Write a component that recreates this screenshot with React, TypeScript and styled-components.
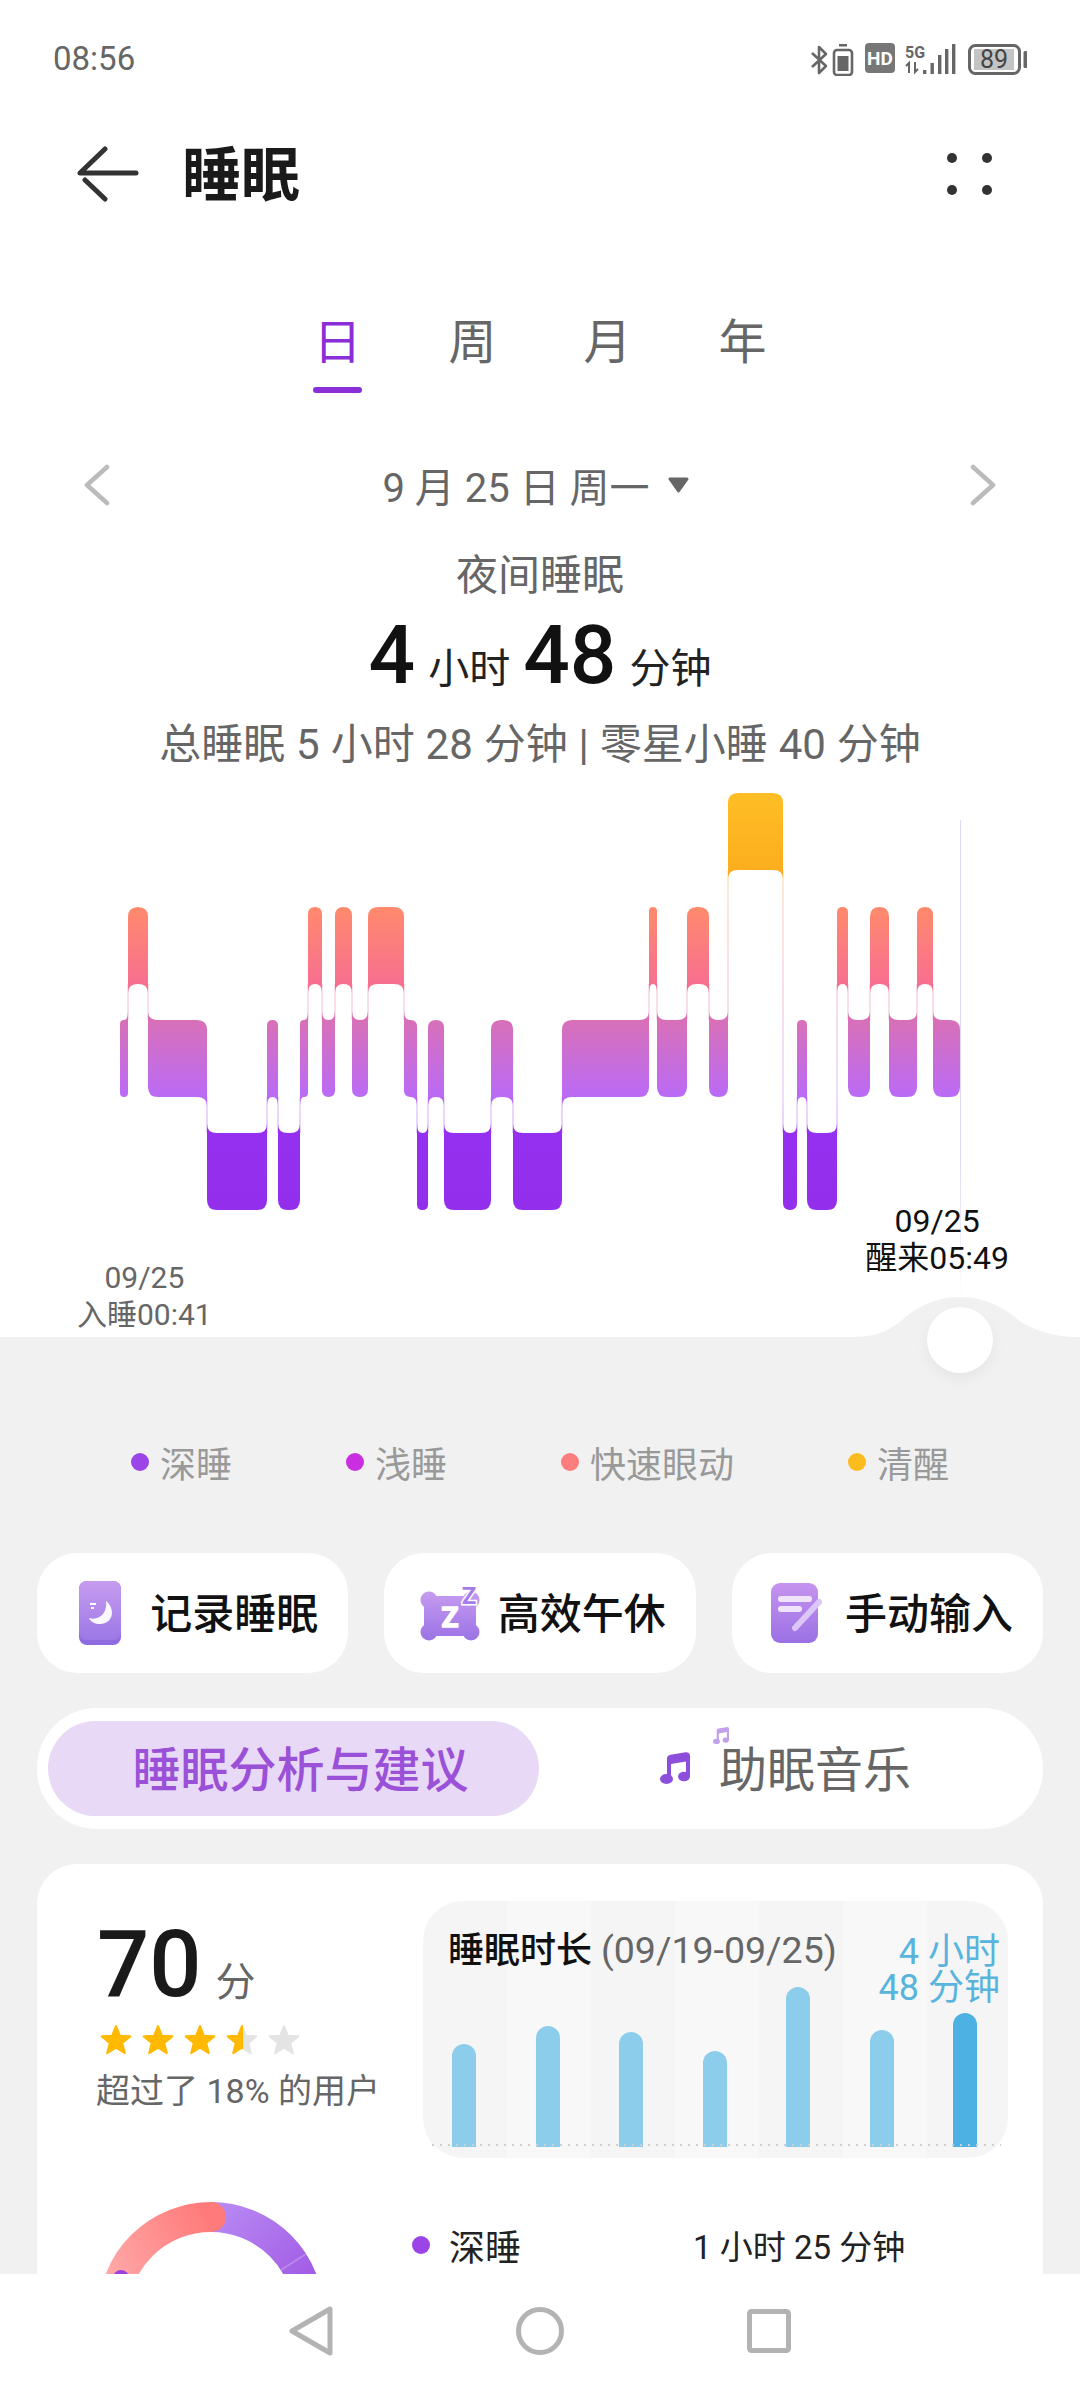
import React from "react";
import styled, { createGlobalStyle } from "styled-components";

const GlobalStyle = createGlobalStyle`
  html, body {
    margin: 0;
    padding: 0;
    background: #f1f1f1;
  }
  body {
    font-family: Roboto, "Noto Sans CJK SC", sans-serif;
  }
  * {
    box-sizing: border-box;
  }
`;

const Page = styled.div`
  width: 1080px;
  height: 2388px;
  display: flex;
  flex-direction: column;
  overflow: hidden;
  background: #f1f1f1;
`;

const Content = styled.div`
  flex: 1;
  min-height: 0;
  overflow: hidden;
`;

const TopPanel = styled.div`
  position: relative;
  height: 1337px;
  background: #fff;
`;

const StatusBar = styled.div`
  height: 116px;
  padding: 0 53px;
  display: flex;
  align-items: center;
  justify-content: space-between;
`;

const Clock = styled.span`
  font-size: 33px;
  color: #666;
`;

const Header = styled.div`
  height: 114px;
  padding: 2px 87px 0 77px;
  display: flex;
  align-items: center;
  gap: 43px;
`;

const Title = styled.h1`
  flex: 1;
  margin: 3px 0 0;
  font-size: 59px;
  line-height: 66px;
  font-weight: 700;
  color: #1a1a1a;
`;

const Tabs = styled.div`
  margin-top: 90px;
  display: flex;
  justify-content: center;
`;

const Tab = styled.div<{ $active?: boolean }>`
  width: 135px;
  height: 73px;
  display: flex;
  flex-direction: column;
  align-items: center;
  justify-content: space-between;
  font-size: 48px;
  line-height: 46px;
  color: ${(p) => (p.$active ? "#8a2fd8" : "#666")};
`;

const TabMark = styled.div`
  width: 49px;
  height: 6px;
  border-radius: 3px;
  background: #8a2fd8;
`;

const DateRow = styled.div`
  margin-top: 62px;
  height: 60px;
  padding: 0 84px;
  display: flex;
  align-items: center;
  justify-content: space-between;
`;

const DateLabel = styled.div`
  display: flex;
  align-items: center;
  gap: 18px;
  margin-right: 9px;
  font-size: 40px;
  color: #666;
`;

const SummaryTitle = styled.div`
  margin-top: 36px;
  font-size: 42px;
  line-height: 50px;
  text-align: center;
  color: #666;
`;

const SummaryMain = styled.div`
  margin-top: 9px;
  height: 90px;
  display: flex;
  align-items: baseline;
  justify-content: center;
  gap: 13px;
  line-height: 90px;
  color: #111;
`;

const BigNumber = styled.span`
  font-size: 82px;
  font-weight: 500;
`;

const Unit = styled.span`
  font-size: 41px;
  color: #222;
`;

const SummaryTotal = styled.div`
  margin-top: 20px;
  font-size: 42px;
  line-height: 50px;
  text-align: center;
  color: #666;
  white-space: nowrap;
  word-spacing: 0.5px;
`;

const ChartSvg = styled.svg`
  display: block;
  margin-top: 10px;
  overflow: visible;
`;

const CursorLine = styled.div`
  position: absolute;
  left: 960px;
  top: 820px;
  width: 1px;
  height: 480px;
  background: linear-gradient(#e0d8f4 70%, rgba(224, 216, 244, 0));
`;

const TimeLabels = styled.div`
  position: relative;
  display: flex;
  justify-content: space-between;
  align-items: flex-start;
  padding: 0 71px 0 77px;
`;

const TimeLabel = styled.div<{ $wake?: boolean }>`
  margin-top: ${(p) => (p.$wake ? 0 : 56)}px;
  font-size: ${(p) => (p.$wake ? 32 : 30)}px;
  line-height: 37px;
  text-align: center;
  color: ${(p) => (p.$wake ? "#111" : "#666")};
`;

const GreyPanel = styled.div`
  position: relative;
  padding: 0 37px;
`;

const Bump = styled.svg`
  position: absolute;
  right: 0;
  top: -40px;
`;

const Handle = styled.div`
  position: absolute;
  left: 927px;
  top: -30px;
  width: 66px;
  height: 66px;
  border-radius: 50%;
  background: #fff;
  box-shadow: 0 6px 14px rgba(0, 0, 0, 0.05);
`;

const Legend = styled.div`
  padding-top: 102px;
  height: 151px;
  display: flex;
  justify-content: center;
  gap: 114px;
`;

const LegendItem = styled.div`
  display: flex;
  align-items: center;
  gap: 11px;
  height: 46px;
  font-size: 36px;
  color: #999;
`;

const Dot = styled.span<{ $color: string }>`
  flex: none;
  width: 18px;
  height: 18px;
  border-radius: 50%;
  background: ${(p) => p.$color};
`;

const Actions = styled.div`
  margin-top: 65px;
  display: grid;
  grid-template-columns: repeat(3, 1fr);
  gap: 36px;
`;

const ActionButton = styled.div<{ $gap: number }>`
  height: 120px;
  padding-right: 30px;
  display: flex;
  align-items: center;
  justify-content: flex-end;
  gap: ${(p) => p.$gap}px;
  border-radius: 40px;
  background: #fff;
  font-size: 42px;
  font-weight: 500;
  color: #111;
`;

const ActionLabel = styled.span`
  margin-bottom: 5px;
`;

const Segment = styled.div`
  margin-top: 35px;
  height: 121px;
  padding: 13px 11px;
  display: flex;
  border-radius: 60px;
  background: #fff;
`;

const SegmentActive = styled.div`
  width: 491px;
  padding: 0 0 5px 14px;
  display: flex;
  align-items: center;
  justify-content: center;
  border-radius: 48px;
  background: #e8daf6;
  font-size: 48px;
  font-weight: 500;
  color: #9b50d8;
`;

const SegmentOther = styled.div`
  flex: 1;
  display: flex;
  align-items: center;
  justify-content: center;
  gap: 29px;
  font-size: 48px;
  color: #666;
`;

const MusicLabel = styled.span`
  position: relative;
  margin-top: 4px;
  line-height: 48px;
`;

const SmallNote = styled.span`
  position: absolute;
  display: block;
  left: -6px;
  top: -20px;
  line-height: 0;
`;

const Card = styled.div`
  margin-top: 35px;
  height: 560px;
  padding: 37px 36px 0 59px;
  border-radius: 40px 40px 0 0;
  background: #fff;
`;

const CardTop = styled.div`
  display: grid;
  grid-template-columns: 327px 585px;
`;

const ScoreColumn = styled.div`
  padding-top: 24px;
`;

const ScoreRow = styled.div`
  display: flex;
  align-items: baseline;
  gap: 14px;
  height: 77px;
  line-height: 80px;
  padding-left: 1px;
`;

const ScoreValue = styled.span`
  font-size: 92px;
  font-weight: 500;
  color: #1a1a1a;
`;

const ScoreUnit = styled.span`
  font-size: 40px;
  color: #666;
`;

const Stars = styled.div`
  margin: 22px 0 0 3px;
  display: flex;
  gap: 8px;
`;

const ScoreNote = styled.div`
  margin-top: 15px;
  font-size: 34px;
  line-height: 40px;
  color: #666;
  white-space: nowrap;
`;

const TrendCard = styled.div`
  position: relative;
  height: 257px;
  border-radius: 40px;
  background: repeating-linear-gradient(90deg, #f5f5f5 0 84px, #f8f8f8 84px 168px);
`;

const TrendHead = styled.div`
  height: 86px;
  padding: 31px 0 0 25px;
  font-size: 36px;
  line-height: 36px;
  white-space: nowrap;
`;

const TrendTitle = styled.span`
  font-weight: 500;
  color: #111;
`;

const TrendRange = styled.span`
  font-size: 37.5px;
  color: #666;
`;

const TrendValue = styled.div`
  position: absolute;
  right: 8px;
  top: 33px;
  font-size: 36px;
  line-height: 36px;
  text-align: right;
  color: #58b4dd;
`;

const TrendBars = styled.div`
  height: 160px;
  padding: 0 31px 0 29px;
  display: flex;
  align-items: flex-end;
  justify-content: space-between;
`;

const TrendBar = styled.div<{ $current?: boolean }>`
  width: 24px;
  border-radius: 12px 12px 0 0;
  background: ${(p) => (p.$current ? "#4db2e3" : "#8ccdeb")};
`;

const TrendBase = styled.div`
  position: absolute;
  left: 9px;
  right: 7px;
  top: 243px;
  height: 2px;
  background: repeating-linear-gradient(90deg, #cfcfcf 0 2px, transparent 2px 8px);
`;

const CardBottom = styled.div`
  margin-top: 44px;
  display: flex;
  align-items: flex-start;
`;

const Donut = styled.svg`
  flex: none;
  margin-left: 2px;
`;

const Breakdown = styled.div`
  margin: 18px 0 0 88px;
  height: 50px;
  display: flex;
  align-items: center;
  gap: 19px;
  font-size: 36px;
  color: #222;
`;

const BreakdownName = styled.span`
  width: 225px;
`;

const BreakdownValue = styled.span`
  font-size: 33px;
`;

const NavBar = styled.div`
  flex: none;
  height: 114px;
  display: flex;
  align-items: center;
  justify-content: center;
  background: #fff;
`;

const NavSlot = styled.div`
  width: 229px;
  display: flex;
  justify-content: center;
`;

const IconSvg = styled.svg`
  flex: none;
  overflow: visible;
`;

const StatusIcons = () => (
  <svg width="216" height="36" viewBox="811 40 216 36" fill="none">
    <polyline points="812,53 826,66 819,73 819,47 826,54 812,67" stroke="#666" strokeWidth="2.6" strokeLinejoin="round" />
    <rect x="834" y="50" width="18" height="25" rx="3" stroke="#666" strokeWidth="2.6" />
    <rect x="837.5" y="56" width="11" height="15" fill="#666" />
    <rect x="839" y="44" width="8" height="2.5" fill="#666" />
    <rect x="865" y="43" width="30" height="30" rx="4" fill="#777" />
    <text x="880" y="65" textAnchor="middle" fontSize="19" fontWeight="700" fill="#fff">HD</text>
    <text x="905" y="58" fontSize="16" fontWeight="700" fill="#666">5G</text>
    <path d="M909 73V63l-3 3M915 62v10l3-3" stroke="#666" strokeWidth="2" />
    <rect x="923" y="70" width="3.4" height="4" fill="#666" />
    <rect x="930.5" y="63" width="3.4" height="11" fill="#666" />
    <rect x="938" y="55" width="3.4" height="19" fill="#666" />
    <rect x="945" y="49" width="3.4" height="25" fill="#666" />
    <rect x="952" y="44" width="3.4" height="30" fill="#666" />
    <rect x="969.5" y="45.5" width="50" height="28" rx="6" stroke="#666" strokeWidth="3" />
    <rect x="974" y="49" width="40" height="21" fill="#c4c4c4" />
    <text x="994" y="68" textAnchor="middle" fontSize="25" fill="#444">89</text>
    <rect x="1023.5" y="51" width="4" height="17" rx="1.5" fill="#666" />
  </svg>
);

const BackArrow = () => (
  <svg width="62" height="56" viewBox="0 0 62 56" fill="none" stroke="#333" strokeWidth="5" strokeLinecap="round" strokeLinejoin="round">
    <path d="M59 27H3L28 3" />
    <path d="M8 34L28 53" />
  </svg>
);

const MoreDots = () => (
  <svg width="46" height="44" viewBox="0 0 46 44" fill="#333">
    <circle cx="5" cy="6" r="5" />
    <circle cx="40" cy="6" r="5" />
    <circle cx="5" cy="38" r="5" />
    <circle cx="40" cy="38" r="5" />
  </svg>
);

const Chevron = ({ right }: { right?: boolean }) => (
  <svg width="26" height="42" viewBox="0 0 26 42" fill="none" stroke="#bbb" strokeWidth="4.5" strokeLinecap="round" strokeLinejoin="round">
    <path d={right ? "M3 3L23 21L3 39" : "M23 3L3 21L23 39"} />
  </svg>
);

const Caret = () => (
  <svg width="21" height="16" viewBox="0 0 21 16" fill="#666" stroke="#666" strokeWidth="3" strokeLinejoin="round">
    <path d="M2 2H19L10.5 14Z" />
  </svg>
);

type Level = "awake" | "rem" | "light" | "deep";

const tops: Record<Level, number> = { awake: 793, rem: 907, light: 1020, deep: 1133 };
const barHeight = 77;

const segments: [Level, number, number][] = [
  ["light", 120, 128], ["rem", 128, 148], ["light", 148, 207], ["deep", 207, 267],
  ["light", 267, 278], ["deep", 278, 300], ["light", 300, 308], ["rem", 308, 322],
  ["light", 322, 335], ["rem", 335, 352], ["light", 352, 368], ["rem", 368, 404],
  ["light", 404, 417], ["deep", 417, 428], ["light", 428, 444], ["deep", 444, 491],
  ["light", 491, 513], ["deep", 513, 562], ["light", 562, 649], ["rem", 649, 657],
  ["light", 657, 687], ["rem", 687, 709], ["light", 709, 728], ["awake", 728, 783],
  ["deep", 783, 797], ["light", 797, 807], ["deep", 807, 837], ["rem", 837, 848],
  ["light", 848, 870], ["rem", 870, 889], ["light", 889, 917], ["rem", 917, 933],
  ["light", 933, 960],
];

const gradientStops: [number, string][] = [
  [793, "#ffbe25"], [870, "#fcae1e"], [907, "#ff8a6c"], [984, "#f76f90"],
  [1020, "#d870b8"], [1097, "#ba6af6"], [1133, "#9630f0"], [1210, "#922eec"],
];

const segmentPath = (i: number) => {
  const [level, x1, x2] = segments[i];
  const top = tops[level];
  const bottom = top + barHeight;
  const prev = segments[i - 1] ? tops[segments[i - 1][0]] : top;
  const next = segments[i + 1] ? tops[segments[i + 1][0]] : top;
  const w = x2 - x1;
  const r = Math.min(w / 2, 10);
  const fx = Math.min(w / 2, 10);
  const fy = 9;
  let d = "";
  d += prev < top ? `M${x1} ${top - fy}Q${x1} ${top} ${x1 + fx} ${top}` : `M${x1} ${top + r}Q${x1} ${top} ${x1 + r} ${top}`;
  d += next < top ? `L${x2 - fx} ${top}Q${x2} ${top} ${x2} ${top - fy}` : `L${x2 - r} ${top}Q${x2} ${top} ${x2} ${top + r}`;
  d += next > top ? `L${x2} ${bottom + fy}Q${x2} ${bottom} ${x2 - fx} ${bottom}` : `L${x2} ${bottom - r}Q${x2} ${bottom} ${x2 - r} ${bottom}`;
  d += prev > top ? `L${x1 + fx} ${bottom}Q${x1} ${bottom} ${x1} ${bottom + fy}Z` : `L${x1 + r} ${bottom}Q${x1} ${bottom} ${x1} ${bottom - r}Z`;
  return d;
};

const SleepChart = () => (
  <ChartSvg width="1080" height="423" viewBox="0 780 1080 423">
    <defs>
      <linearGradient id="sleepFill" gradientUnits="userSpaceOnUse" x1="0" y1="793" x2="0" y2="1210">
        {gradientStops.map(([y, color]) => (
          <stop key={y} offset={(y - 793) / 417} stopColor={color} />
        ))}
      </linearGradient>
    </defs>
    {segments.slice(0, -1).map(([level, , x2], i) => {
      const a = tops[level];
      const b = tops[segments[i + 1][0]];
      return (
        <line
          key={x2}
          x1={x2}
          x2={x2}
          y1={Math.min(a, b) + barHeight}
          y2={Math.max(a, b)}
          stroke="url(#sleepFill)"
          strokeWidth="1"
          opacity="0.45"
        />
      );
    })}
    {segments.map(([, x1], i) => (
      <path key={x1} d={segmentPath(i)} fill="url(#sleepFill)" />
    ))}
  </ChartSvg>
);

const RecordIcon = () => (
  <svg width="42" height="64" viewBox="0 0 42 64">
    <defs>
      <linearGradient id="recordFill" x1="0" y1="0" x2="0" y2="1">
        <stop offset="0" stopColor="#c79cf0" />
        <stop offset="1" stopColor="#9c78e6" />
      </linearGradient>
    </defs>
    <rect width="42" height="64" rx="8" fill="#8f6be0" />
    <rect width="42" height="59" rx="8" fill="url(#recordFill)" />
    <path d="M27 20C37 28 34 43 21 43C16 43 12 41 10 37C20 40 29 32 27 20Z" fill="#fff" opacity="0.95" />
    <rect x="11" y="22" width="6" height="2" fill="#fff" />
    <rect x="12" y="26" width="3" height="2" fill="#fff" />
  </svg>
);

const PillowIcon = () => (
  <IconSvg width="60" height="55" viewBox="0 0 60 55">
    <defs>
      <linearGradient id="pillowFill" gradientUnits="userSpaceOnUse" x1="0" y1="5" x2="0" y2="55">
        <stop offset="0" stopColor="#c79cf0" />
        <stop offset="1" stopColor="#9a72e6" />
      </linearGradient>
    </defs>
    <g fill="url(#pillowFill)">
      <rect x="4" y="10" width="52" height="40" rx="12" />
      <circle cx="9" cy="14" r="8.500" />
      <circle cx="51" cy="14" r="8.500" />
      <circle cx="9" cy="46" r="8.500" />
      <circle cx="51" cy="46" r="8.500" />
    </g>
    <text x="30" y="41" textAnchor="middle" fontSize="28" fontWeight="700" fill="#fff" stroke="#fff" strokeWidth="1.5">Z</text>
    <text x="49" y="18" textAnchor="middle" fontSize="24" fontWeight="700" fill="#a67ce8" stroke="#fff" strokeWidth="3" paintOrder="stroke">Z</text>
  </IconSvg>
);

const ManualIcon = () => (
  <svg width="52" height="60" viewBox="0 0 52 60">
    <defs>
      <linearGradient id="manualFill" x1="0" y1="0" x2="0" y2="1">
        <stop offset="0" stopColor="#c694ef" />
        <stop offset="1" stopColor="#9a70e4" />
      </linearGradient>
    </defs>
    <rect width="47" height="60" rx="9" fill="url(#manualFill)" />
    <rect x="7" y="13" width="34" height="6" rx="3" fill="#f0e4fb" />
    <rect x="7" y="23" width="24" height="6" rx="3" fill="#f0e4fb" />
    <path d="M24 45L48 19" stroke="#dcc6f7" strokeWidth="6" strokeLinecap="round" />
  </svg>
);

const MusicNote = ({ size, color }: { size: number; color: string }) => (
  <svg width={size} height={size * 1.07} viewBox="0 0 30 32" fill={color}>
    <path d="M7 6.5C7 4 8.500 3 10.500 2.600L25.500 0.200C28 0 30 1 30 4V25H26V9.500L11 12V28H7Z" />
    <ellipse cx="6.500" cy="27" rx="6.500" ry="5" />
    <ellipse cx="24" cy="24.500" rx="6" ry="4.800" />
  </svg>
);

const starPoints = Array.from({ length: 10 }, (_, i) => {
  const radius = i % 2 ? 6.6 : 15;
  const angle = (Math.PI / 5) * i - Math.PI / 2;
  return `${17 + radius * Math.cos(angle)},${17 + radius * Math.sin(angle)}`;
}).join(" ");

const Star = ({ fill }: { fill: string }) => (
  <svg width="34" height="32" viewBox="0 0 34 32">
    <defs>
      <linearGradient id="halfStar" x1="0" y1="0" x2="1" y2="0">
        <stop offset="0.54" stopColor="#ffb900" />
        <stop offset="0.54" stopColor="#e4e4e4" />
      </linearGradient>
    </defs>
    <polygon points={starPoints} fill={fill} stroke={fill} strokeWidth="2" strokeLinejoin="round" />
  </svg>
);

const SleepDonut = () => (
  <Donut width="226" height="226" viewBox="0 0 226 226" fill="none">
    <defs>
      <linearGradient id="donutPurple" gradientUnits="userSpaceOnUse" x1="113" y1="0" x2="226" y2="113">
        <stop offset="0" stopColor="#ba8cf4" />
        <stop offset="1" stopColor="#9a4ee0" />
      </linearGradient>
      <linearGradient id="donutCoral" gradientUnits="userSpaceOnUse" x1="10" y1="90" x2="120" y2="30">
        <stop offset="0" stopColor="#ffabab" />
        <stop offset="1" stopColor="#ff7a7a" />
      </linearGradient>
    </defs>
    <path d="M113 15A98 98 0 0 1 211 113" stroke="url(#donutPurple)" strokeWidth="30" />
    <line x1="183" y1="68" x2="208" y2="52" stroke="#fff" strokeOpacity="0.25" strokeWidth="1.5" />
    <path d="M15 113A98 98 0 0 1 113 15" stroke="url(#donutCoral)" strokeWidth="30" strokeLinecap="round" />
    <circle cx="23" cy="76" r="8" fill="#9b40e0" />
  </Donut>
);

const NavBack = () => (
  <svg width="44" height="50" viewBox="0 0 44 50" fill="none" stroke="#b3b3b3" strokeWidth="5" strokeLinejoin="round">
    <path d="M41 3V47L3 25Z" />
  </svg>
);

const NavHome = () => (
  <svg width="48" height="50" viewBox="0 0 48 50" fill="none" stroke="#b3b3b3" strokeWidth="5">
    <circle cx="24" cy="25" r="21.500" />
  </svg>
);

const NavRecent = () => (
  <svg width="44" height="44" viewBox="0 0 44 44" fill="none" stroke="#b3b3b3" strokeWidth="5" strokeLinejoin="round">
    <rect x="2.500" y="2.500" width="39" height="39" rx="2" />
  </svg>
);

const legendItems = [
  { name: "深睡", color: "#9b45e8" },
  { name: "浅睡", color: "#c92fe0" },
  { name: "快速眼动", color: "#fb7d7d" },
  { name: "清醒", color: "#fcbc1f" },
];

const trendHeights = [103, 121, 115, 96, 160, 117, 134];

const App: React.FC = () => {
  return (
    <Page>
      <GlobalStyle />
      <Content>
        <TopPanel>
          <StatusBar>
            <Clock>08:56</Clock>
            <StatusIcons />
          </StatusBar>
          <Header>
            <BackArrow />
            <Title>睡眠</Title>
            <MoreDots />
          </Header>
          <Tabs>
            <Tab $active>
              日
              <TabMark />
            </Tab>
            <Tab>周</Tab>
            <Tab>月</Tab>
            <Tab>年</Tab>
          </Tabs>
          <DateRow>
            <Chevron />
            <DateLabel>
              9 月 25 日 周一
              <Caret />
            </DateLabel>
            <Chevron right />
          </DateRow>
          <SummaryTitle>夜间睡眠</SummaryTitle>
          <SummaryMain>
            <BigNumber>4</BigNumber>
            <Unit>小时</Unit>
            <BigNumber>48</BigNumber>
            <Unit>分钟</Unit>
          </SummaryMain>
          <SummaryTotal>总睡眠 5 小时 28 分钟 | 零星小睡 40 分钟</SummaryTotal>
          <SleepChart />
          <CursorLine />
          <TimeLabels>
            <TimeLabel>
              09/25
              <br />
              入睡00:41
            </TimeLabel>
            <TimeLabel $wake>
              09/25
              <br />
              醒来05:49
            </TimeLabel>
          </TimeLabels>
        </TopPanel>
        <GreyPanel>
          <Bump width="226" height="40" viewBox="0 0 226 40">
            <path d="M0 40C30 40 42 28 54 18C68 7 86 0 106 0C126 0 144 7 158 18C170 28 190 40 226 40Z" fill="#f1f1f1" />
          </Bump>
          <Handle />
          <Legend>
            {legendItems.map((item) => (
              <LegendItem key={item.name}>
                <Dot $color={item.color} />
                {item.name}
              </LegendItem>
            ))}
          </Legend>
          <Actions>
            <ActionButton $gap={29}>
              <RecordIcon />
              <ActionLabel>记录睡眠</ActionLabel>
            </ActionButton>
            <ActionButton $gap={18}>
              <PillowIcon />
              <ActionLabel>高效午休</ActionLabel>
            </ActionButton>
            <ActionButton $gap={22}>
              <ManualIcon />
              <ActionLabel>手动输入</ActionLabel>
            </ActionButton>
          </Actions>
          <Segment>
            <SegmentActive>睡眠分析与建议</SegmentActive>
            <SegmentOther>
              <MusicNote size={30} color="#8d4fdb" />
              <MusicLabel>
                <SmallNote>
                  <MusicNote size={16} color="#c3a0ea" />
                </SmallNote>
                助眠音乐
              </MusicLabel>
            </SegmentOther>
          </Segment>
          <Card>
            <CardTop>
              <ScoreColumn>
                <ScoreRow>
                  <ScoreValue>70</ScoreValue>
                  <ScoreUnit>分</ScoreUnit>
                </ScoreRow>
                <Stars>
                  <Star fill="#ffb900" />
                  <Star fill="#ffb900" />
                  <Star fill="#ffb900" />
                  <Star fill="url(#halfStar)" />
                  <Star fill="#e4e4e4" />
                </Stars>
                <ScoreNote>超过了 18% 的用户</ScoreNote>
              </ScoreColumn>
              <TrendCard>
                <TrendHead>
                  <TrendTitle>睡眠时长</TrendTitle> <TrendRange>(09/19-09/25)</TrendRange>
                </TrendHead>
                <TrendValue>
                  4 小时
                  <br />
                  48 分钟
                </TrendValue>
                <TrendBars>
                  {trendHeights.map((h, i) => (
                    <TrendBar key={i} $current={i === trendHeights.length - 1} style={{ height: h }} />
                  ))}
                </TrendBars>
                <TrendBase />
              </TrendCard>
            </CardTop>
            <CardBottom>
              <SleepDonut />
              <Breakdown>
                <Dot $color="#9b45e8" />
                <BreakdownName>深睡</BreakdownName>
                <BreakdownValue>1 小时 25 分钟</BreakdownValue>
              </Breakdown>
            </CardBottom>
          </Card>
        </GreyPanel>
      </Content>
      <NavBar>
        <NavSlot>
          <NavBack />
        </NavSlot>
        <NavSlot>
          <NavHome />
        </NavSlot>
        <NavSlot>
          <NavRecent />
        </NavSlot>
      </NavBar>
    </Page>
  );
};

export default App;
